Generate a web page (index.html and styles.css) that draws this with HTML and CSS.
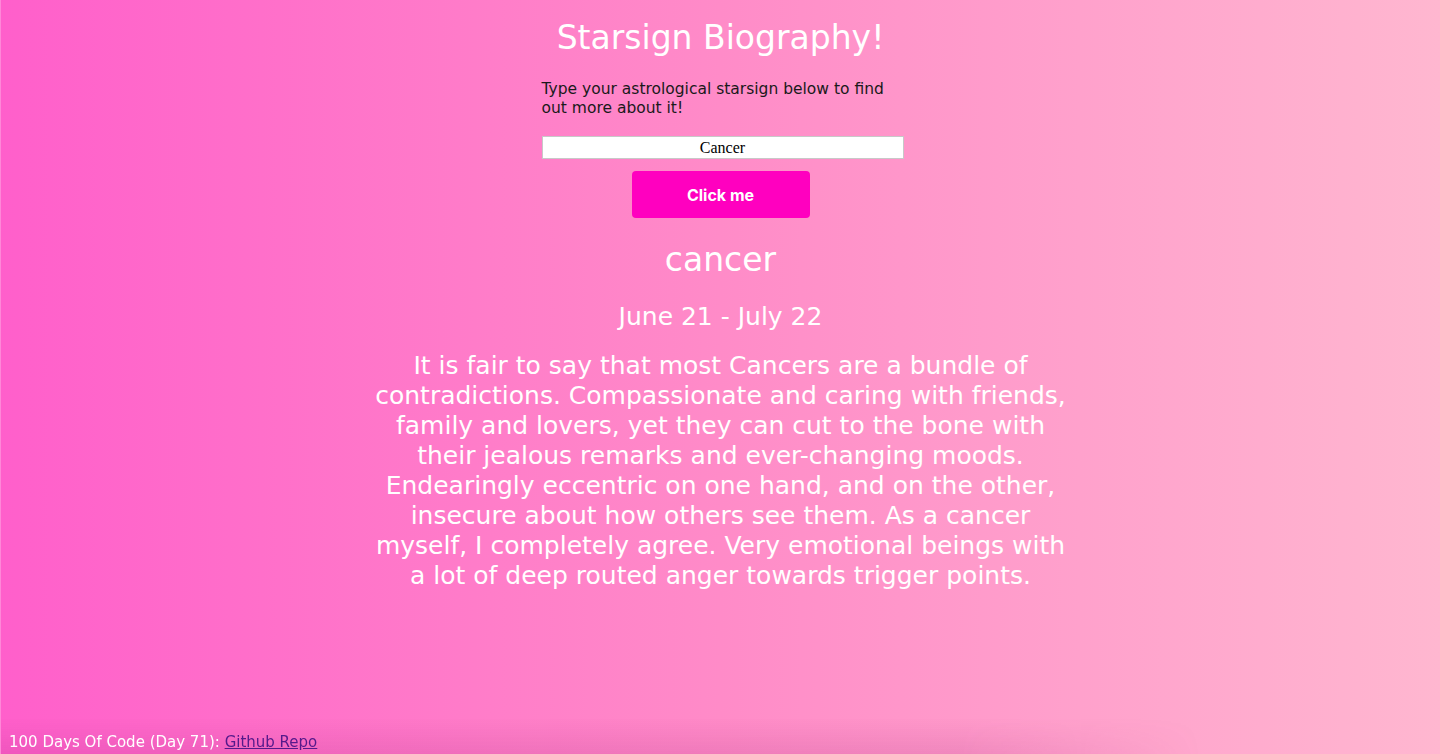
FILE: index.html
```html
<!DOCTYPE html>
<html lang="en">
<head>
<meta charset="utf-8">
<title>Starsign Biography!</title>
<link rel="stylesheet" href="styles.css">
</head>
<body>
<div class="page">
  <main class="main">
    <h1 class="title">Starsign Biography!</h1>
    <div class="form">
      <p class="intro">Type your astrological starsign below to find out more about it!</p>
      <input class="sign-input" type="text" value="Cancer">
    </div>
    <button class="btn" type="button">Click me</button>
    <h2 class="sign-name">cancer</h2>
    <h3 class="sign-dates">June 21 - July 22</h3>
    <p class="sign-bio">It is fair to say that most Cancers are a bundle of contradictions. Compassionate and caring with friends, family and lovers, yet they can cut to the bone with their jealous remarks and ever-changing moods. Endearingly eccentric on one hand, and on the other, insecure about how others see them. As a cancer myself, I completely agree. Very emotional beings with a lot of deep routed anger towards trigger points.</p>
  </main>
  <footer class="footer">100 Days Of Code (Day 71): <a class="repo-link" href="#">Github Repo</a></footer>
</div>
</body>
</html>
```

FILE: styles.css
```css
html, body {
  margin: 0;
  padding: 0;
  height: 100%;
}

body {
  background: linear-gradient(to right, #ff5fcb 0%, #ff8bc8 50%, #ffb7d0 100%);
  font-family: "DejaVu Sans", sans-serif;
  color: #fff;
  overflow: hidden;
}

.page {
  min-height: 100vh;
  display: flex;
  flex-direction: column;
  box-sizing: border-box;
  border-left: 1px solid rgba(255, 255, 255, 0.25);
}

.main {
  width: 700px;
  margin: 0 auto;
  display: flex;
  flex-direction: column;
  align-items: center;
  text-align: center;
}

.title {
  margin: 17px 0 0;
  font-size: 33px;
  font-weight: 400;
  line-height: 42px;
}

.form {
  width: 362px;
  margin: 21px 0 0 4px;
  text-align: left;
}

.intro {
  margin: 0;
  color: #1a1a1a;
  font-size: 15.5px;
  line-height: 19px;
  font-weight: 400;
}

.sign-input {
  display: block;
  box-sizing: border-box;
  width: 362px;
  height: 23px;
  margin-top: 18px;
  border: 1px solid #c8c8c8;
  background: #fff;
  font-family: "Liberation Serif", serif;
  font-size: 16px;
  text-align: center;
  color: #000;
  padding: 0;
}

.btn {
  margin-top: 12px;
  width: 178px;
  height: 47px;
  border: none;
  border-radius: 4px;
  background: #ff00bf;
  color: #fff;
  font-family: Inter, Roboto, sans-serif;
  font-weight: 700;
  font-size: 16px;
}

.sign-name {
  margin: 21px 0 0;
  font-size: 33px;
  font-weight: 400;
  line-height: 42px;
}

.sign-dates {
  margin: 21px 0 0;
  font-size: 25px;
  font-weight: 400;
  line-height: 30px;
}

.sign-bio {
  margin: 19px 0 0;
  font-size: 25px;
  line-height: 30px;
}

.footer {
  margin-top: auto;
  width: 1200px;
  padding: 14px 8px 2px;
  box-sizing: border-box;
  font-size: 15px;
  line-height: 20px;
  background: linear-gradient(to bottom, rgba(150, 30, 110, 0) 0%, rgba(150, 30, 110, 0.14) 100%);
  -webkit-mask-image: linear-gradient(to right, #000 80%, transparent 100%);
  mask-image: linear-gradient(to right, #000 80%, transparent 100%);
}

.repo-link {
  color: #551a8b;
}
```
